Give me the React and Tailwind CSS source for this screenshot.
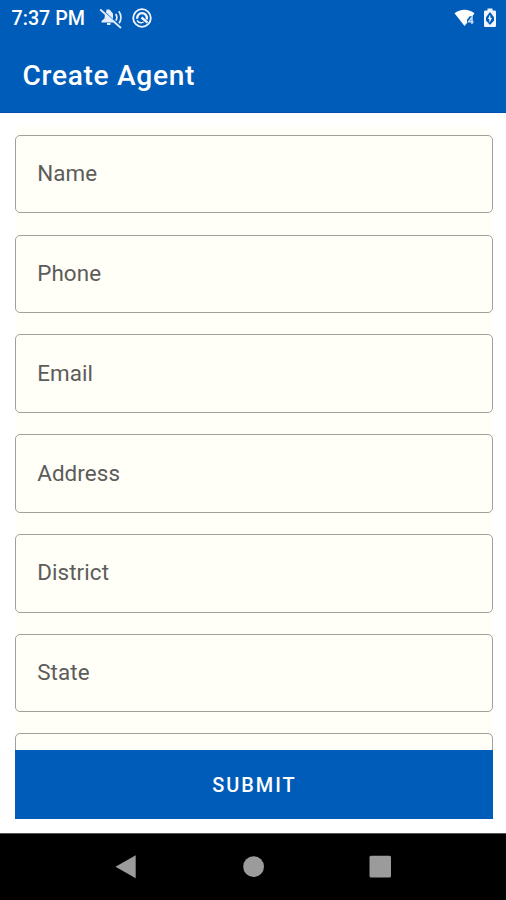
import React from 'react';

const fields = ['Name', 'Phone', 'Email', 'Address', 'District', 'State', ''];

const VibrateOffIcon = () => (
  <svg width="24" height="24" viewBox="0 0 24 24" fill="none" stroke="#e4edfb" strokeWidth="1.7">
    <path d="M7.5 3.5h3l3.5 4v5.5l-7-6.5z" fill="#e4edfb" stroke="none" />
    <path d="M6 8l9 8.5H2.5V15l3-2.5z" fill="#e4edfb" stroke="none" />
    <path d="M8 18h3.5" strokeWidth="2" />
    <path d="M1.2 3.5 22 22" strokeWidth="1.7" />
    <path d="M16.6 8c1.5 2 1.5 4.6 .2 6.6" />
    <path d="M19.8 5.2c2.8 3.6 2.8 8.6 .3 12" />
  </svg>
);

const DataSaverIcon = () => (
  <svg width="20" height="20" viewBox="0 0 20 20" fill="none" stroke="#f1f5ff">
    <circle cx="10" cy="10" r="8.8" strokeWidth="1.8" />
    <path d="M5.2 10.8A4.9 4.9 0 1 1 14.7 11.5" strokeWidth="2.4" />
    <path d="M9.5 9.5l6 5.2" strokeWidth="2.4" />
    <path d="M5 12.3c1.2 2.2 4 3 6.6 1.9" strokeWidth="1.4" />
  </svg>
);

const WifiIcon = () => (
  <svg width="22" height="18" viewBox="0 0 22 18">
    <path d="M0.5 4.3C6.2-.4 14.8-.4 20.5 4.3L18.4 7.2h-2.7L13 10.8v3.2l-2.5 3z" fill="#fff" />
    <path d="M18 15V8.3l-3.4 4.5h5" fill="none" stroke="#c9dcf7" strokeWidth="1.5" />
  </svg>
);

const BatteryIcon = () => (
  <svg width="14" height="20" viewBox="0 0 14 20">
    <path d="M4.5.5h5v2h2.2c.7 0 1.3.6 1.3 1.3v13.9c0 .7-.6 1.3-1.3 1.3H2.3C1.6 19 1 18.4 1 17.7V3.8c0-.7.6-1.3 1.3-1.3h2.2z" fill="#f1f5ff" />
    <path d="M6.5 4.5 3 9.2v3.2l3.5 4.2 1-.2 3.5-4V9.2L7.5 4.5z" fill="#005cb9" />
    <path d="M7 6.5 5 11h1.3v4L9 10H7.6z" fill="#f1f5ff" />
  </svg>
);

const StatusBar = () => (
  <div className="flex h-[34px] items-center justify-between pt-[2px] pr-[9px] pl-[11.5px]">
    <div className="flex items-center">
      <span className="w-[87.5px] pt-[2px] text-[19.7px] leading-none font-medium whitespace-nowrap">7:37 PM</span>
      <VibrateOffIcon />
      <span className="ml-[9px]">
        <DataSaverIcon />
      </span>
    </div>
    <div className="flex items-center gap-[7px]">
      <WifiIcon />
      <BatteryIcon />
    </div>
  </div>
);

const NavBar = () => (
  <div className="h-[67px] shrink-0 border-t border-[#555555] bg-black">
    <svg width="506" height="66" viewBox="0 0 506 66" fill="#9b9b9b">
      <path d="M115.5 32.7 135.7 21.2v23z" />
      <circle cx="253.6" cy="32.7" r="10.4" />
      <rect x="369.5" y="21.8" width="21.5" height="21.8" rx="1.5" />
    </svg>
  </div>
);

const App = () => {
  return (
    <div className="flex h-[900px] w-[506px] flex-col overflow-hidden bg-white font-['Roboto',sans-serif]">
      <header className="h-[113px] shrink-0 border-b border-[#004fae] bg-[#005cb9] text-white">
        <StatusBar />
        <h1 className="pt-[25px] pl-[22.5px] text-[28.1px] leading-[34px] font-medium tracking-[0.7px]">Create Agent</h1>
      </header>

      <main className="flex min-h-0 flex-1 flex-col pt-[14px] pr-[13.5px] pb-[14.5px] pl-[14.5px]">
        <div className="flex min-h-0 flex-1 flex-col gap-[21.2px] overflow-hidden bg-[#fffef7] pt-[7.8px]">
          {fields.map((field, index) => (
            <div
              key={index}
              className="flex h-[78.6px] shrink-0 items-center rounded-[5px] border border-[#a0a09c] pl-[21.7px] text-[22.4px] tracking-[0.1px] text-[#5c5c5a]"
            >
              {field}
            </div>
          ))}
        </div>
        <button className="h-[68.5px] shrink-0 bg-[#005cb9] pt-[3px] pl-[2px] text-[19.9px] font-medium tracking-[2px] text-white">
          SUBMIT
        </button>
      </main>

      <NavBar />
    </div>
  );
};

export default App;
